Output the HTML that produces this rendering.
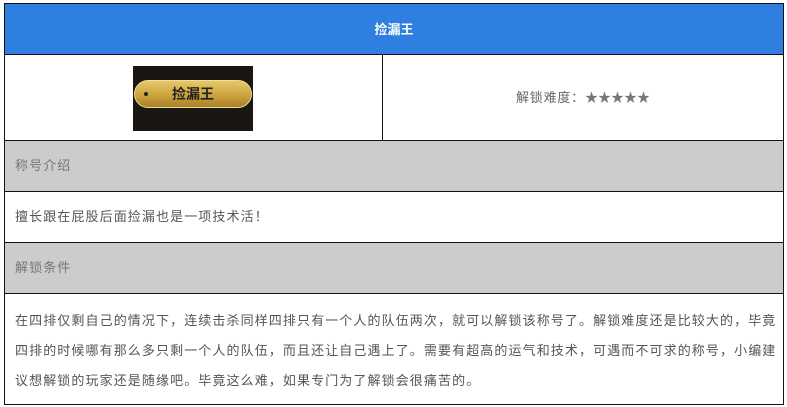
<!DOCTYPE html>
<html><head><meta charset="utf-8"><style>
body{margin:0;background:#fff;width:787px;height:407px;overflow:hidden;font-family:"Liberation Sans","Noto Sans CJK SC",sans-serif;font-size:13px;color:#666}
.t{position:absolute;left:4px;top:3px;width:778px;border:1px solid #111;}
.r{border-bottom:1px solid #111;box-sizing:border-box;position:relative}
.h{height:51px;background:#2f7fe0;color:#fff;font-weight:bold;text-align:center;line-height:51px}
.g{background:#cccccc;padding-left:10px;line-height:50px;height:51px;color:#777;letter-spacing:1.1px}
.w{background:#fff;padding-left:10px;line-height:50px;height:51px;color:#555;letter-spacing:1.1px}
</style></head><body>
<div class="t">
<div class="r h">捡漏王</div>
<div class="r" style="height:86px">
 <div style="position:absolute;left:377px;top:0;bottom:0;border-left:1px solid #111"></div>
 <div style="position:absolute;left:128px;top:11px;width:120px;height:65px;background:#1a1612">
  <div style="position:absolute;left:1px;top:14px;width:118px;height:28px;border-radius:14px;background:linear-gradient(#e6c86a,#c9a03a 60%,#a7802a);border:1px solid #f0dc9a;box-sizing:border-box;text-align:center;line-height:26px;color:#222;font-size:14px;font-weight:bold">捡漏王
   <span style="position:absolute;left:9px;top:11px;width:4px;height:4px;border-radius:2px;background:#222"></span></div>
 </div>
 <div style="position:absolute;left:378px;right:0;top:0;line-height:86px;text-align:center;color:#666;letter-spacing:0.8px">解锁难度：<span style="color:#777;letter-spacing:0">★★★★★</span></div>
</div>
<div class="r g">称号介绍</div>
<div class="r w">擅长跟在屁股后面捡漏也是一项技术活！</div>
<div class="r g">解锁条件</div>
<div style="padding:12px 0 0 10px;line-height:30px;height:98px;color:#555;letter-spacing:1.1px;white-space:nowrap">在四排仅剩自己的情况下，连续击杀同样四排只有一个人的队伍两次，就可以解锁该称号了。解锁难度还是比较大的，毕竟<br>四排的时候哪有那么多只剩一个人的队伍，而且还让自己遇上了。需要有超高的运气和技术，可遇而不可求的称号，小编建<br>议想解锁的玩家还是随缘吧。毕竟这么难，如果专门为了解锁会很痛苦的。</div>
</div>
</body></html>
